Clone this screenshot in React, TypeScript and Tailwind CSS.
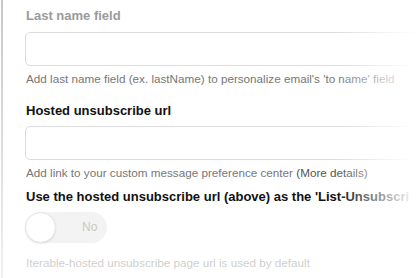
export default function App() {
  return (
    <div className="relative w-[416px] h-[278px] overflow-hidden bg-white" style={{ fontFamily: "'Liberation Sans', Arial, sans-serif" }}>
      <div className="absolute left-[1px] top-0 h-full w-[2px] bg-gradient-to-b from-[#c8c8c8] to-[#f0f0f0]" />
      <div className="flex flex-col pl-[25px] pt-[8px] w-[520px]">
        <div className="text-[13px] font-bold text-[#9b9b9b] leading-[16px] pl-[1px]">Last name field</div>
        <div className="mt-[8px] h-[34px] rounded-[5px] border border-[#dcdcdc] bg-white" />
        <div className="mt-[5px] text-[11.7px] leading-[16px] text-[#777] pl-[1px] whitespace-nowrap">
          Add last name field (ex. lastName) to personalize email's 'to name' field
        </div>
        <div className="mt-[16px] text-[13px] font-bold text-[#111] leading-[16px] pl-[1px]">Hosted unsubscribe url</div>
        <div className="mt-[7px] h-[34px] rounded-[5px] border border-[#dcdcdc] bg-white" />
        <div className="mt-[5px] text-[11.7px] leading-[16px] text-[#777] pl-[1px] whitespace-nowrap">
          Add link to your custom message preference center <span className="text-[#555]">(More details)</span>
        </div>
        <div className="mt-[8px] text-[13px] font-bold text-[#111] leading-[16px] pl-[1px] whitespace-nowrap">
          Use the hosted unsubscribe url (above) as the 'List-Unsubscri
        </div>
        <div className="mt-[7px] relative h-[31px] w-[82px] rounded-full bg-[#f3f3f3]">
          <div className="absolute left-0 top-0 h-[31px] w-[31px] rounded-full bg-white border border-[#e4e4e4] shadow-[0_1px_2px_rgba(0,0,0,0.08)]" />
          <span className="absolute left-[57px] top-[7px] text-[12px] leading-[16px] text-[#c9c9c9]">No</span>
        </div>
        <div className="mt-[12px] text-[11.7px] leading-[16px] text-[#cfcfcf] pl-[1px] whitespace-nowrap">
          Iterable-hosted unsubscribe page url is used by default
        </div>
      </div>
      <div className="absolute right-0 top-0 h-full w-[80px] bg-gradient-to-r from-transparent to-white" />
    </div>
  );
}
